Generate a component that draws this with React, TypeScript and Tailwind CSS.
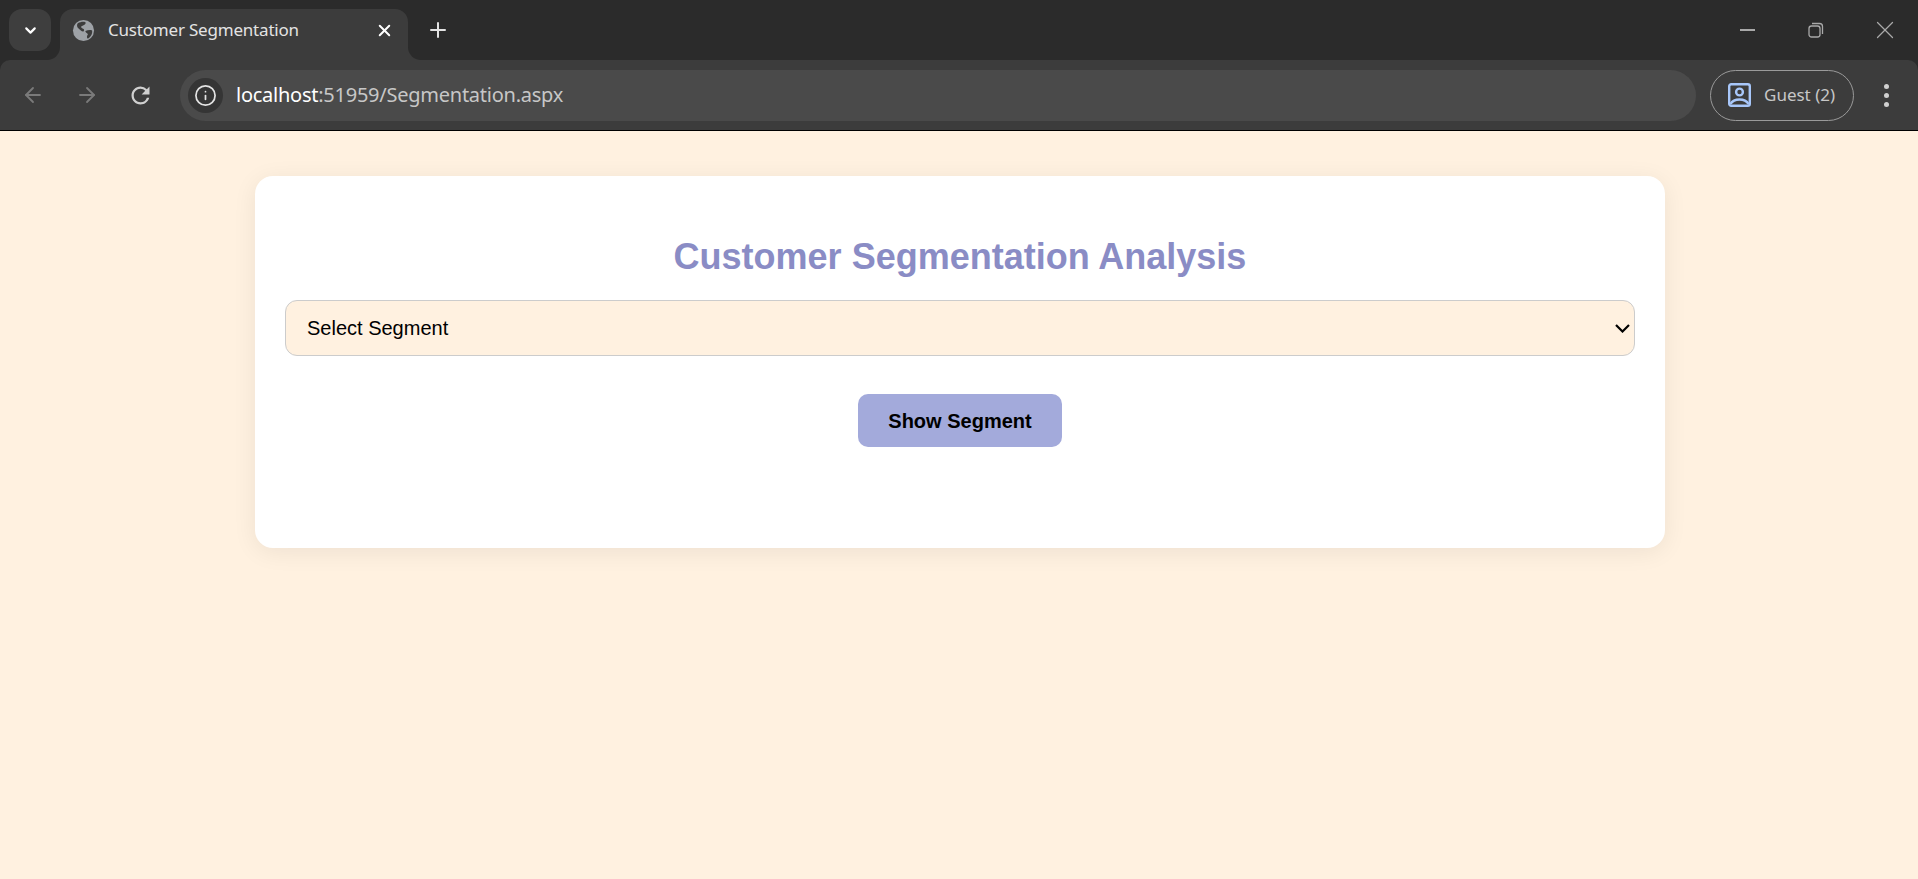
import { ArrowLeft, ArrowRight, ChevronDown, Info, Plus, X } from "lucide-react";

function Globe() {
  return (
    <svg width="23" height="23" viewBox="0 0 24 24">
      <circle cx="12" cy="12" r="11" fill="#9ea2a7" />
      <path d="M6 4.500c3-1.500 6-2 8-1 1 1.500-1 3-3 3.500-2 .5-2 2 0 3 2 .5 2 2 1 3-1.500.500-4-2-6-4-1-1.500-1-3 0-4.500z" fill="#3c3c3c" />
      <path d="M14 12.500c2.500-1 5-1.500 7-.5.500 3.500-1.500 7-4.500 8.500-1.500-1-1-3 0-4 .5-1.500-3-2.500-2.500-4z" fill="#3c3c3c" />
    </svg>
  );
}

function GuestIcon() {
  return (
    <svg width="23" height="24" viewBox="0 0 23 24" fill="none" stroke="#a8c7fa" strokeWidth="2.400">
      <rect x="1.200" y="1.200" width="20.600" height="21.600" rx="2" />
      <circle cx="11.500" cy="9" r="3.400" />
      <path d="M2.500 21c2-3.500 5.500-4.500 9-4.500s7 1 9 4.500" />
    </svg>
  );
}

function Restore() {
  return (
    <svg width="16" height="16" viewBox="0 0 16 16" fill="none" stroke="#a9a9a9" strokeWidth="1.300">
      <rect x="1" y="4" width="11" height="11" rx="2.500" />
      <path d="M4 1.500h7.500a3 3 0 0 1 3 3V12" />
    </svg>
  );
}

function Reload() {
  return (
    <svg width="27" height="27" viewBox="0 0 24 24" fill="#d0d0d0">
      <path d="M17.650 6.350A7.958 7.958 0 0 0 12 4c-4.420 0-7.990 3.580-7.990 8s3.570 8 7.990 8c3.730 0 6.840-2.550 7.730-6h-2.080A5.990 5.990 0 0 1 12 18c-3.310 0-6-2.690-6-6s2.690-6 6-6c1.660 0 3.140.690 4.220 1.780L13 11h7V4l-2.350 2.350z" />
    </svg>
  );
}

function TabStrip() {
  return (
    <div className="h-[60px] bg-[#2b2b2b] flex items-start pt-[9px] pl-[9px]">
      <div className="w-[42px] h-[42px] rounded-[13px] bg-[#3e3e3e] flex items-center justify-center text-white">
        <ChevronDown size={17} strokeWidth={3} />
      </div>
      {/* tab */}
      <div className="relative ml-[9px] w-[348px] h-[51px] bg-[#3c3c3c] rounded-t-[13px] flex items-center pb-[9px] pl-[12px] pr-[14px]">
        <div className="absolute -left-[13px] bottom-0 w-[13px] h-[13px] bg-[#3c3c3c]">
          <div className="w-full h-full bg-[#2b2b2b] rounded-br-[13px]"></div>
        </div>
        <div className="absolute -right-[13px] bottom-0 w-[13px] h-[13px] bg-[#3c3c3c]">
          <div className="w-full h-full bg-[#2b2b2b] rounded-bl-[13px]"></div>
        </div>
        <Globe />
        <span className="ml-[13px] text-[17px] text-[#e3e3e3] font-['Noto_Sans',sans-serif] tracking-[-0.2px]">Customer Segmentation</span>
        <X size={19} strokeWidth={2.500} className="ml-auto text-white" />
      </div>
      <Plus size={24} strokeWidth={2} className="ml-[18px] mt-[9px] text-[#e3e3e3]" />
      {/* window buttons */}
      <div className="ml-auto flex items-center h-[42px] pr-[18px] text-[#a9a9a9]">
        <div className="w-[15px] h-[2px] bg-[#a9a9a9]"></div>
        <div className="ml-[53px]">
          <Restore />
        </div>
        <X size={30} strokeWidth={1} className="ml-[46px]" />
      </div>
    </div>
  );
}

function Toolbar() {
  return (
    <div className="h-[71px] bg-[#2b2b2b] border-b border-b-black">
      <div className="h-[70px] bg-[#3c3c3c] rounded-t-[10px] flex items-center pl-[21px] pr-[29px]">
        <ArrowLeft size={24} strokeWidth={1.800} className="text-[#7a7a7a]" />
        <ArrowRight size={24} strokeWidth={1.800} className="ml-[30px] text-[#7a7a7a]" />
        <div className="ml-[28px]">
          <Reload />
        </div>
        <div className="ml-[26px] flex-1 h-[51px] bg-[#4a4a4a] rounded-full flex items-center pl-[8px]">
          <div className="w-[35px] h-[35px] rounded-full bg-[#353535] flex items-center justify-center text-[#e3e3e3]">
            <Info size={23} strokeWidth={1.800} />
          </div>
          <span className="ml-[13px] text-[20px] font-['Noto_Sans',sans-serif] tracking-[-0.25px] text-[#c7c7c7]">
            <span className="text-white">localhost</span>:51959/Segmentation.aspx
          </span>
        </div>
        <div className="ml-[14px] w-[144px] h-[51px] rounded-full border-[1.500px] border-[#9a9a9a] flex items-center pl-[17px]">
          <GuestIcon />
          <span className="ml-[13px] text-[17px] text-[#c7c7c7] font-['Noto_Sans',sans-serif]">Guest (2)</span>
        </div>
        <div className="ml-[30px] flex flex-col gap-[4px]">
          <div className="w-[5px] h-[5px] rounded-full bg-[#d0d0d0]"></div>
          <div className="w-[5px] h-[5px] rounded-full bg-[#d0d0d0]"></div>
          <div className="w-[5px] h-[5px] rounded-full bg-[#d0d0d0]"></div>
        </div>
      </div>
    </div>
  );
}

export default function App() {
  return (
    <div className="h-screen overflow-hidden flex flex-col bg-[#fff1e0]">
      <TabStrip />
      <Toolbar />
      <div className="flex-1">
        {/* segmentation card */}
        <div className="mt-[45px] ml-[255px] h-[372px] w-[1410px] bg-white rounded-[18px] shadow-[0_4px_24px_rgba(0,0,0,0.07)] px-[30px] pt-[60px] flex flex-col items-center font-['Liberation_Sans',sans-serif]">
          <h2 className="text-[36px] leading-[42px] font-bold text-[#8a8cc5]">Customer Segmentation Analysis</h2>
          <div className="relative w-full mt-[22px]">
            <select className="block w-full h-[56px] appearance-none rounded-[12px] border border-[#cccccc] bg-[#fff1e0] pl-[21px] text-[20px] text-black outline-none">
              <option>Select Segment</option>
            </select>
            <svg className="absolute right-[5px] top-[24px]" width="15" height="9" viewBox="0 0 15 9" fill="none" stroke="black" strokeWidth="2.200">
              <path d="M1 1l6.500 6.500L14 1" />
            </svg>
          </div>
          <button className="mt-[38px] w-[204px] h-[53px] rounded-[10px] bg-[#a3aadb] text-[20px] font-bold text-black">Show Segment</button>
        </div>
      </div>
    </div>
  );
}
